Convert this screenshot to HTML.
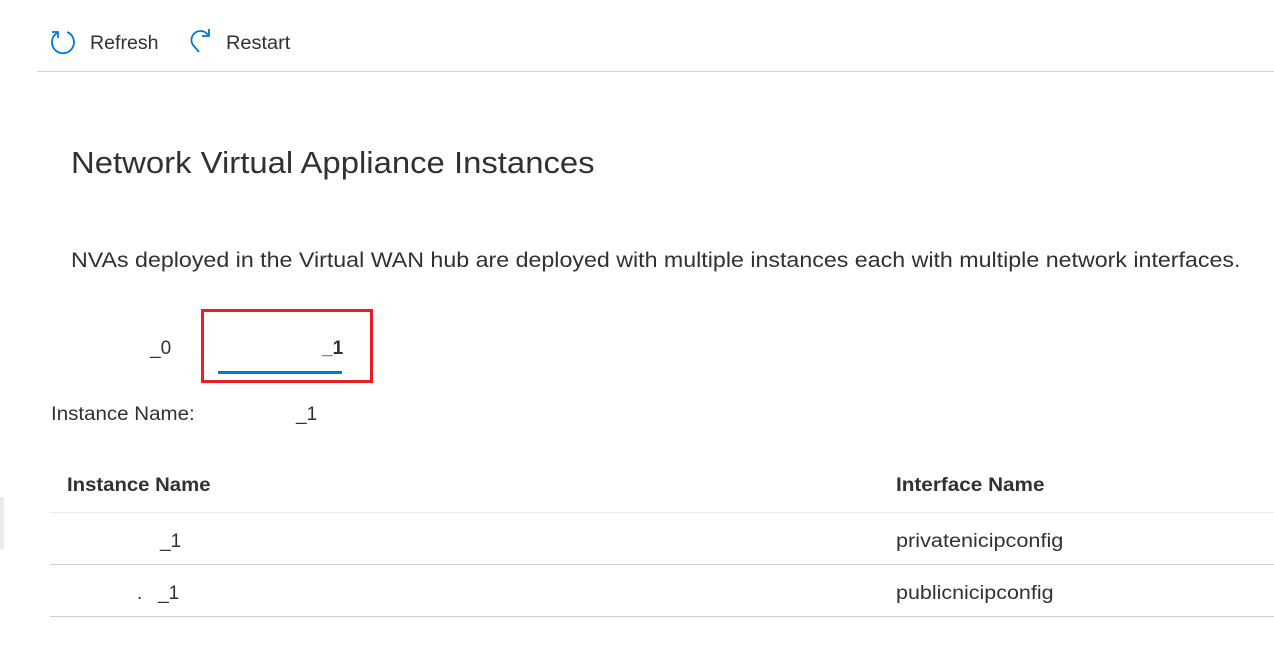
<!DOCTYPE html>
<html><head><meta charset="utf-8"><style>
body{margin:0;width:1274px;height:665px;background:#fff;position:relative;overflow:hidden;font-family:"Liberation Sans",sans-serif;color:#323130}
.a{position:absolute;white-space:nowrap;line-height:1;transform-origin:0 0}
.hl{position:absolute;height:1px}
</style></head><body>
<svg class="a" style="left:49px;top:28px" width="28" height="28" viewBox="0 0 28 28"><path d="M8 5 A11 11 0 1 0 18 4" fill="none" stroke="#0078d4" stroke-width="1.8"/><path d="M3 4 L9 4 L9 10" fill="none" stroke="#0078d4" stroke-width="1.8"/></svg>
<div class="a" style="left:90px;top:34px;font-size:19px;transform:scaleX(1.03)">Refresh</div>
<svg class="a" style="left:186px;top:27px" width="28" height="28" viewBox="0 0 28 28"><path d="M14 4 A9 9 0 0 0 7 18 L13 25" fill="none" stroke="#0078d4" stroke-width="1.8"/><path d="M14 4 A9 9 0 0 1 22 8" fill="none" stroke="#0078d4" stroke-width="1.8"/><path d="M23 2 L23 9 L16 9" fill="none" stroke="#0078d4" stroke-width="1.8"/></svg>
<div class="a" style="left:226px;top:34px;font-size:19px;transform:scaleX(1.05)">Restart</div>
<div class="hl" style="left:37px;top:71px;width:1237px;background:#d6d6d6"></div>
<div class="a" style="left:71px;top:147px;font-size:31px;transform:scaleX(1.06)">Network Virtual Appliance Instances</div>
<div class="a" style="left:71px;top:250px;font-size:21px;transform:scaleX(1.105)">NVAs deployed in the Virtual WAN hub are deployed with multiple instances each with multiple network interfaces.</div>
<div class="a" style="left:150px;top:339px;font-size:19px">_0</div>
<div class="a" style="left:201px;top:309px;width:166px;height:68px;border:3px solid #e81e25"></div>
<div class="a" style="left:322px;top:339px;font-size:19px;font-weight:bold">_1</div>
<div class="a" style="left:218px;top:371px;width:124px;height:3px;background:#0078d4"></div>
<div class="a" style="left:51px;top:405px;font-size:19px;transform:scaleX(1.08)">Instance Name:</div>
<div class="a" style="left:296px;top:405px;font-size:19px">_1</div>
<div class="a" style="left:67px;top:476px;font-size:19px;font-weight:bold;transform:scaleX(1.07)">Instance Name</div>
<div class="a" style="left:896px;top:476px;font-size:19px;font-weight:bold;transform:scaleX(1.09)">Interface Name</div>
<div class="hl" style="left:50px;top:512px;width:1224px;background:#ededed"></div>
<div class="a" style="left:0;top:497px;width:4px;height:52px;background:#edebe9"></div>
<div class="a" style="left:160px;top:532px;font-size:19px">_1</div>
<div class="a" style="left:896px;top:532px;font-size:19px;transform:scaleX(1.14)">privatenicipconfig</div>
<div class="hl" style="left:50px;top:564px;width:1224px;background:#d1d1d1"></div>
<div class="a" style="left:137px;top:584px;font-size:19px">.&nbsp;&nbsp;&nbsp;_1</div>
<div class="a" style="left:896px;top:584px;font-size:19px;transform:scaleX(1.13)">publicnicipconfig</div>
<div class="hl" style="left:50px;top:616px;width:1224px;background:#d1d1d1"></div>
</body></html>
